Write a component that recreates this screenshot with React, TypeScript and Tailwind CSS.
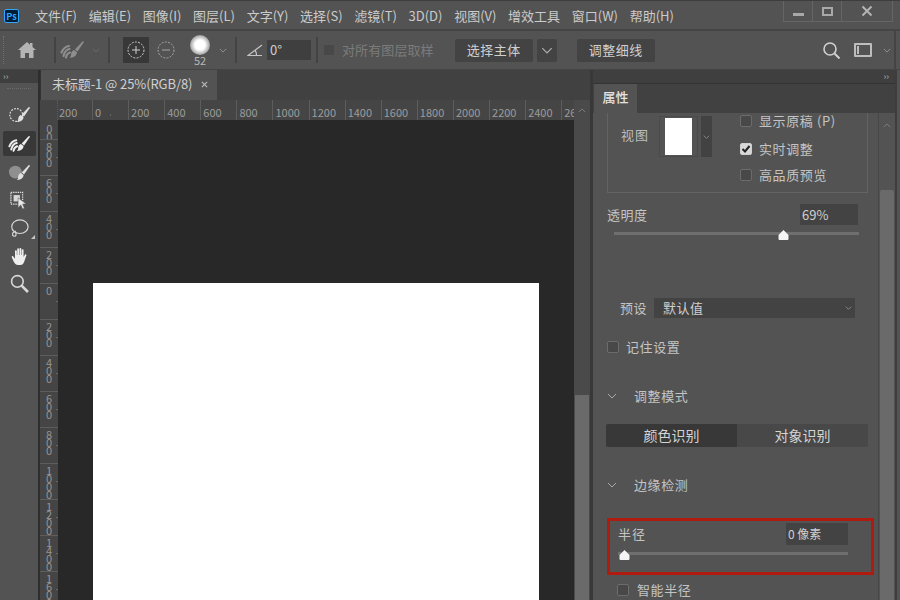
import React from "react";

const FONT = "[font-family:'Noto_Sans_CJK_SC','Liberation_Sans',sans-serif]";
const menus = ["文件(F)", "编辑(E)", "图像(I)", "图层(L)", "文字(Y)", "选择(S)", "滤镜(T)", "3D(D)", "视图(V)", "增效工具", "窗口(W)", "帮助(H)"];
const hLabels = ["0", "200", "400", "600", "800", "1000", "1200", "1400", "1600", "1800", "2000", "2200", "2400", "26"];
const vLabels = ["800", "600", "400", "200", "0", "200", "400", "600", "800", "1000", "1200", "1400", "1600"];

function Chevron({ className = "", up = false }: { className?: string; up?: boolean }) {
  return (
    <svg viewBox="0 0 10 6" fill="none" stroke="currentColor" strokeWidth="1" className={className}>
      <path d={up ? "M1 5l4-4 4 4" : "M1 1l4 4 4-4"} />
    </svg>
  );
}

function BrushHandle() {
  return (
    <>
      <path d="M22.500 1.500c.8-.5 1.500.2 1.100 1L17.500 11.500l-2.600-2z" fill="currentColor" stroke="none" />
      <path d="M14 10l3 2.300c-.3 3-2.800 5.700-7.500 5.400 1.700-1.200 1.500-2.800 1.700-4.200.2-1.500 1.400-2.900 2.800-3.500z" fill="currentColor" stroke="none" />
    </>
  );
}

function BrushRefine({ className = "" }: { className?: string }) {
  return (
    <svg viewBox="0 0 24 20" className={className} fill="none" stroke="currentColor">
      <BrushHandle />
      <path d="M9 6C5.500 6.500 3 9 1.500 12.500M9.500 9C6.500 9.500 4.500 12 3.500 16M10 12.500c-2 .5-3.300 2-4 5" strokeWidth="2.200" strokeLinecap="round" />
    </svg>
  );
}

function Check({ checked = false }: { checked?: boolean }) {
  return (
    <span className={`flex h-[12px] w-[12px] shrink-0 items-center justify-center rounded-[2px] border ${checked ? "border-[#cfcfcf] bg-[#d8d8d8]" : "border-[#6c6c6c] bg-[#484848]"}`}>
      {checked && (
        <svg viewBox="0 0 10 10" className="h-[10px] w-[10px]" fill="none" stroke="#222" strokeWidth="2">
          <path d="M1.500 5l2.500 2.500L8.500 2" />
        </svg>
      )}
    </span>
  );
}

function Slider({ width, pos }: { width: string; pos: string }) {
  return (
    <div className={`relative h-[3px] bg-[#6f6f6f] ${width}`}>
      <svg viewBox="0 0 11 10" className={`absolute top-[-2px] h-[10px] w-[11px] ${pos}`}>
        <path d="M5.500 0L10.500 5 V9 Q10.500 10 9.500 10 H1.500 Q.5 10 .5 9 V5z" fill="#f4f4f4" />
      </svg>
    </div>
  );
}

function Section({ label, mt }: { label: string; mt: string }) {
  return (
    <div className={`flex h-[20px] items-center text-[13px] text-[#c4c4c4] ${mt}`}>
      <Chevron className="h-[6px] w-[10px] text-[#a8a8a8]" />
      <span className="ml-[17px] tracking-[0.6px]">{label}</span>
    </div>
  );
}

export default function App() {
  return (
    <div className={`flex h-[600px] w-[900px] flex-col overflow-hidden bg-[#535353] text-[13px] text-[#cbcbcb] ${FONT}`}>
      {/* Menu bar */}
      <div className="flex h-[31px] shrink-0 items-start border-t border-t-[#3d3d3d] border-b-2 border-b-[#454545] pl-[4px]">
        <div className="mt-[8px] flex h-[14px] w-[15px] items-center justify-center rounded-[2px] border border-[#31a8ff] bg-[#001e36] text-[9px] font-bold leading-none text-[#31a8ff]">Ps</div>
        <div className="ml-[16px] mt-[4px] flex gap-[11.700px] whitespace-nowrap leading-[22px]">
          {menus.map((m) => (
            <span key={m}>{m}</span>
          ))}
        </div>
        <div className="ml-auto mr-[7px] flex h-[21px] w-[110px] items-center border border-t-0 border-[#656565] text-[#b8b8b8]">
          <span className="flex h-full w-[29px] items-end justify-center border-r border-[#656565] pb-[5px]">
            <span className="h-[3px] w-[11px] bg-[#a8a8a8]" />
          </span>
          <span className="flex h-full w-[29px] items-center justify-center border-r border-[#656565]">
            <span className="h-[9px] w-[11px] border-2 border-[#a8a8a8]" />
          </span>
          <span className="flex h-full flex-1 items-center justify-center">
            <svg viewBox="0 0 12 12" className="h-[12px] w-[12px]" stroke="#b4b4b4" strokeWidth="2">
              <path d="M1.500 1.500l9 9M10.500 1.500l-9 9" />
            </svg>
          </span>
        </div>
      </div>

      {/* Options bar */}
      <div className="flex h-[39px] shrink-0 items-center border-b border-[#444]">
        <span className="ml-[3px] h-[28px] w-[2px] border-l border-dotted border-[#707070]" />
        <svg viewBox="0 0 18 16" className="ml-[13px] h-[16px] w-[18px]" fill="#b4b4b4">
          <path d="M9 0L0 8h2.500v8h4.500v-5h4v5h4.500V8H18L14.500 4.900V1h-2.500v1.700z" />
        </svg>
        <span className="ml-[18px] h-[26px] w-[2px] bg-[#434343]" />
        <BrushRefine className="ml-[4px] h-[20px] w-[24px] text-[#8e8e8e]" />
        <Chevron className="ml-[8px] h-[5px] w-[8px] text-[#707070]" />
        <span className="ml-[8px] h-[26px] w-[2px] bg-[#434343]" />
        <span className="ml-[13px] flex h-[26px] w-[26px] items-center justify-center bg-[#383838]">
          <svg viewBox="0 0 18 18" className="h-[18px] w-[18px]" fill="none" stroke="#cfcfcf">
            <circle cx="9" cy="9" r="8" strokeDasharray="2 1.300" />
            <path d="M5 9h8M9 5v8" />
          </svg>
        </span>
        <svg viewBox="0 0 18 18" className="ml-[8px] h-[18px] w-[18px]" fill="none" stroke="#a8a8a8">
          <circle cx="9" cy="9" r="8" strokeDasharray="2 1.300" />
          <path d="M5 9h8" />
        </svg>
        <span className="ml-[12px] flex w-[26px] flex-col items-center">
          <span className="h-[20px] w-[20px] rounded-full bg-[radial-gradient(circle,#ffffff_35%,#7a7a7a_85%,transparent_100%)]" />
          <span className="text-[11px] leading-[11px] text-[#b8b8b8]">52</span>
        </span>
        <Chevron className="ml-[6px] h-[5px] w-[8px] text-[#a0a0a0]" />
        <span className="ml-[8px] h-[26px] w-[2px] bg-[#434343]" />
        <svg viewBox="0 0 16 13" className="ml-[10px] h-[13px] w-[16px]" fill="none" stroke="#c4c4c4" strokeWidth="1.200">
          <path d="M15 1L1 11.500h14M8 6.500c1.200 1.200 1.600 3 1.500 5" />
        </svg>
        <span className="ml-[4px] flex h-[20px] w-[44px] items-center bg-[#3f3f3f] pl-[3px] text-[#cfcfcf]">0°</span>
        <span className="ml-[5px] h-[26px] w-[2px] bg-[#434343]" />
        <span className="ml-[6px] h-[10px] w-[10px] rounded-[1px] bg-[#484848]" />
        <span className="ml-[8px] tracking-[0.1px] text-[#7b7b7b]">对所有图层取样</span>
        <span className="ml-[21px] flex h-[23px] w-[78px] items-center justify-center rounded-[2px] bg-[#434343] tracking-[0.5px] text-[#d0d0d0]">选择主体</span>
        <span className="ml-[4px] flex h-[23px] w-[20px] items-center justify-center rounded-[2px] bg-[#434343]">
          <Chevron className="h-[7px] w-[12px] text-[#b0b0b0]" />
        </span>
        <span className="ml-[20px] flex h-[23px] w-[78px] items-center justify-center rounded-[2px] bg-[#434343] tracking-[0.5px] text-[#d0d0d0]">调整细线</span>
        <svg viewBox="0 0 17 17" className="ml-[168px] h-[17px] w-[17px]" fill="none" stroke="#d0d0d0" strokeWidth="1.600">
          <circle cx="7" cy="7" r="6" />
          <path d="M11.500 11.500l5 5" strokeWidth="2" />
        </svg>
        <span className="ml-[14px] flex h-[14px] w-[18px] items-center rounded-[1px] border-2 border-[#bdbdbd] pl-[1px]">
          <span className="h-[8px] w-[2px] bg-[#bdbdbd]" />
        </span>
        <Chevron className="ml-[11px] h-[5px] w-[8px] text-[#a0a0a0]" />
        <span className="ml-[3px] h-full w-[2px] bg-[#444]" />
      </div>

      {/* Main area */}
      <div className="flex min-h-0 flex-1">
        {/* Tools */}
        <div className="flex w-[38px] shrink-0 flex-col items-center bg-[#535353]">
          <div className="flex h-[13px] w-full items-center bg-[#3f3f3f] pl-[3px] text-[9px] leading-none text-[#b0b0b0]">››</div>
          <div className="mt-[5px] h-[3px] w-[24px] border-t border-dotted border-[#6b6b6b]" />
          <svg viewBox="0 0 24 20" className="mt-[14px] h-[20px] w-[22px] text-[#e0e0e0]" fill="none" stroke="currentColor">
            <BrushHandle />
            <circle cx="9" cy="10" r="7" strokeDasharray="2 1.300" strokeWidth="1.200" />
          </svg>
          <div className="mt-[6px] flex h-[25px] w-[33px] items-center justify-center rounded-[2px] bg-[#383838]">
            <BrushRefine className="h-[20px] w-[22px] text-[#eeeeee]" />
          </div>
          <svg viewBox="0 0 24 20" className="mt-[7px] h-[20px] w-[22px] text-[#e0e0e0]">
            <circle cx="8" cy="9" r="7" fill="#8f8f8f" />
            <BrushHandle />
          </svg>
          <svg viewBox="0 0 20 20" className="mt-[8px] h-[19px] w-[18px]" fill="none" stroke="#e0e0e0">
            <rect x="1" y="1" width="13" height="13" strokeDasharray="1.500 1" strokeWidth="1.400" />
            <rect x="4" y="4" width="7" height="7" fill="#d8d8d8" stroke="none" />
            <path d="M9 7l9 7h-4l2 4.500-2 1-2-4.500-3 3z" fill="#e8e8e8" stroke="#535353" strokeWidth="0.600" />
          </svg>
          <div className="relative mt-[9px] h-[19px] w-[20px]">
            <svg viewBox="0 0 22 20" className="h-[19px] w-[20px]" fill="none" stroke="#d8d8d8" strokeWidth="1.300">
              <ellipse cx="12" cy="8" rx="9" ry="7.500" />
              <path d="M6 14c-2.500 0-3 4-.5 4.500s3-2.500 1-6" />
            </svg>
            <span className="absolute bottom-[-1px] right-[-6px] h-0 w-0 border-b-[4px] border-l-[4px] border-b-[#c8c8c8] border-l-transparent" />
          </div>
          <svg viewBox="0 0 18 20" className="mt-[9px] h-[18px] w-[17px]" fill="#eeeeee">
            <path d="M4 10V4.500a1 1 0 012 0V9h.5V2.500a1 1 0 012 0V9H9V2a1 1 0 012 0v7h.5V3.500a1 1 0 012 0V11l1.500-2.500c.8-1 2.200-.2 1.600 1L14 17c-.8 1.600-1.800 3-4 3H7.500C5 20 3.500 18 2.500 16L.4 11.500c-.5-1.200 1-1.900 1.700-1L4 13z" />
          </svg>
          <svg viewBox="0 0 18 18" className="mt-[9px] h-[19px] w-[19px]" fill="none" stroke="#d8d8d8" strokeWidth="1.500">
            <circle cx="7" cy="7" r="5.500" />
            <path d="M11 11l6 6" strokeWidth="2.500" />
          </svg>
        </div>
        <div className="w-[2px] shrink-0 bg-[#2e2e2e]" />

        {/* Document */}
        <div className="flex w-[550px] shrink-0 flex-col">
          <div className="flex h-[30px] shrink-0 bg-[#414141]">
            <div className="flex w-[177px] items-center border-l border-[#333] bg-[#535353] pb-[2px] pl-[11px] whitespace-nowrap text-[13px] tracking-[-0.1px] text-[#d0d0d0]">
              未标题-1 @ 25%(RGB/8)
              <svg viewBox="0 0 8 8" className="ml-[9px] h-[7px] w-[7px]" stroke="#c0c0c0" strokeWidth="1.200">
                <path d="M1 1l6 6M7 1L1 7" />
              </svg>
            </div>
          </div>
          <div className="flex h-[20px] shrink-0 overflow-hidden bg-[#454545] text-[11px] leading-[24px] text-[#9c9c9c]">
            <div className="w-[18px] shrink-0 border-r border-dotted border-[#5c5c5c]" />
            <div className="w-[34px] shrink-0 pl-[1px]">200</div>
            <div className="flex w-[482px] shrink-0 overflow-hidden">
              {hLabels.map((l, i) => (
                <div key={i} className="relative w-[36.100px] shrink-0 border-l border-[#5d5d5d] pl-[2px]">
                  {l}
                  <span className="absolute bottom-[4px] left-[17px] h-[2px] w-px bg-[#666]" />
                </div>
              ))}
            </div>
            <div className="flex w-[16px] shrink-0 items-center justify-center bg-[#4a4a4a]">
              <Chevron up className="h-[5px] w-[8px] text-[#8a8a8a]" />
            </div>
          </div>
          <div className="flex min-h-0 flex-1">
            <div className="flex w-[18px] shrink-0 flex-col overflow-hidden bg-[#454545] text-[11px] text-[#959595]">
              <div className="flex h-[19px] shrink-0 items-end justify-center overflow-hidden">
                <span className="tracking-[-3px] [text-orientation:upright] [writing-mode:vertical-rl]">00</span>
              </div>
              {vLabels.map((l, i) => (
                <div key={i} className="relative flex h-[36px] shrink-0 justify-center overflow-hidden border-t border-[#5d5d5d] pt-px">
                  <span className="leading-[18px] tracking-[-3px] [text-orientation:upright] [writing-mode:vertical-rl]">{l}</span>
                  <span className="absolute right-0 top-[17px] h-px w-[2px] bg-[#666]" />
                </div>
              ))}
            </div>
            <div className="min-w-0 flex-1 overflow-hidden bg-[#282828] pl-[35px] pt-[163px]">
              <div className="h-[400px] w-[446px] bg-white" />
            </div>
            <div className="flex w-[16px] shrink-0 flex-col bg-[#4a4a4a]">
              <div className="h-[275px] shrink-0" />
              <div className="ml-[1px] w-[14px] flex-1 bg-[#6a6a6a]" />
            </div>
          </div>
        </div>
        <div className="w-[3px] shrink-0 bg-[#383838]" />

        {/* Properties panel */}
        <div className="flex w-[302px] shrink-0 flex-col">
          <div className="flex h-[13px] shrink-0 items-center justify-end bg-[#3f3f3f] pr-[6px] text-[9px] leading-none text-[#b0b0b0]">››</div>
          <div className="flex h-[30px] shrink-0 border-t border-[#333] bg-[#414141]">
            <div className="ml-px flex w-[43px] items-center justify-center bg-[#535353] pb-[3px] font-medium text-[#e4e4e4]">属性</div>
          </div>
          <div className="flex min-h-0 flex-1">
            <div className="w-[285px] shrink-0 overflow-hidden pl-[14px]">
              {/* 视图 group */}
              <div className="flex h-[80px] w-[261px] items-start border border-t-0 border-[#636363]">
                <span className="ml-[13px] mt-[12px] tracking-[1px] text-[#bdbdbd]">视图</span>
                <div className="ml-[10px] mt-[3px] flex h-[41px] w-[39px] justify-center border border-[#4a4a4a] pt-px">
                  <div className="h-[37px] w-[27px] bg-white" />
                </div>
                <div className="ml-[3px] mt-[3px] flex h-[41px] w-[11px] items-center justify-center bg-[#424242]">
                  <Chevron className="h-[4px] w-[7px] text-[#a8a8a8]" />
                </div>
                <div className="-mt-px ml-[28px] flex flex-col text-[#c4c4c4]">
                  <div className="flex h-[17px] items-center gap-[7px] tracking-[0.6px]"><Check />显示原稿 (P)</div>
                  <div className="mt-[11px] flex h-[17px] items-center gap-[7px] tracking-[0.6px]"><Check checked />实时调整</div>
                  <div className="mt-[9px] flex h-[17px] items-center gap-[7px] tracking-[0.6px]"><Check />高品质预览</div>
                </div>
              </div>
              {/* 透明度 */}
              <div className="mt-[11px] flex h-[21px] w-[265px] items-center">
                <span className="tracking-[0.5px] text-[#c4c4c4]">透明度</span>
                <span className="ml-auto mr-[14px] flex h-[21px] w-[58px] items-center bg-[#434343] pl-[2px] text-[#cfcfcf]">69%</span>
              </div>
              <div className="ml-[7px] mt-[7px]">
                <Slider width="w-[245px]" pos="left-[164px]" />
              </div>
              {/* 预设 */}
              <div className="ml-[13px] mt-[62px] flex h-[21px] items-center">
                <span className="w-[34px] tracking-[0.5px] text-[#c4c4c4]">预设</span>
                <span className="flex h-[20px] w-[201px] items-center justify-between bg-[#434343] pl-[9px] pr-[3px] tracking-[0.5px] text-[#cfcfcf]">
                  默认值
                  <Chevron className="h-[4px] w-[7px] text-[#a8a8a8]" />
                </span>
              </div>
              <div className="mt-[19px] flex h-[20px] items-center gap-[7px] tracking-[0.6px] text-[#c4c4c4]">
                <Check />记住设置
              </div>
              <Section label="调整模式" mt="mt-[29px]" />
              {/* Segment */}
              <div className="-ml-px mt-[18px] flex h-[23px] w-[262px] overflow-hidden rounded-[2px] bg-[#484848] text-center text-[14px] leading-[22px] text-[#d4d4d4]">
                <div className="w-[131px] bg-[#383838]">颜色识别</div>
                <div className="flex-1">对象识别</div>
              </div>
              <Section label="边缘检测" mt="mt-[28px]" />
              {/* Red highlighted block */}
              <div className="mt-[23px] h-[57px] w-[267px] border-[3px] border-[#b01b10] pl-[8px]">
                <div className="flex h-[22px] items-center pt-[3px]">
                  <span className="tracking-[1px] text-[#c4c4c4]">半径</span>
                  <span className="ml-[140px] flex h-[22px] w-[62px] items-center bg-[#434343] pl-[2px] text-[12px] text-[#d0d0d0]">0 像素</span>
                </div>
                <div className="mt-[9px]">
                  <Slider width="w-[230px]" pos="left-[1px]" />
                </div>
              </div>
              <div className="ml-[10px] mt-[6px] flex h-[17px] items-center gap-[8px] tracking-[0.6px] text-[#c4c4c4]">
                <Check />智能半径
              </div>
            </div>
            <div className="flex w-[17px] shrink-0 flex-col border-l border-[#474747]">
              <div className="flex h-[77px] shrink-0 items-start justify-center pt-[10px]">
                <Chevron up className="h-[5px] w-[8px] text-[#8a8a8a]" />
              </div>
              <div className="ml-[1px] w-[14px] flex-1 rounded-t-[2px] bg-[#6a6a6a]" />
            </div>
          </div>
        </div>
        <div className="w-[2px] shrink-0 bg-[#3d3d3d]" />
      </div>
    </div>
  );
}
